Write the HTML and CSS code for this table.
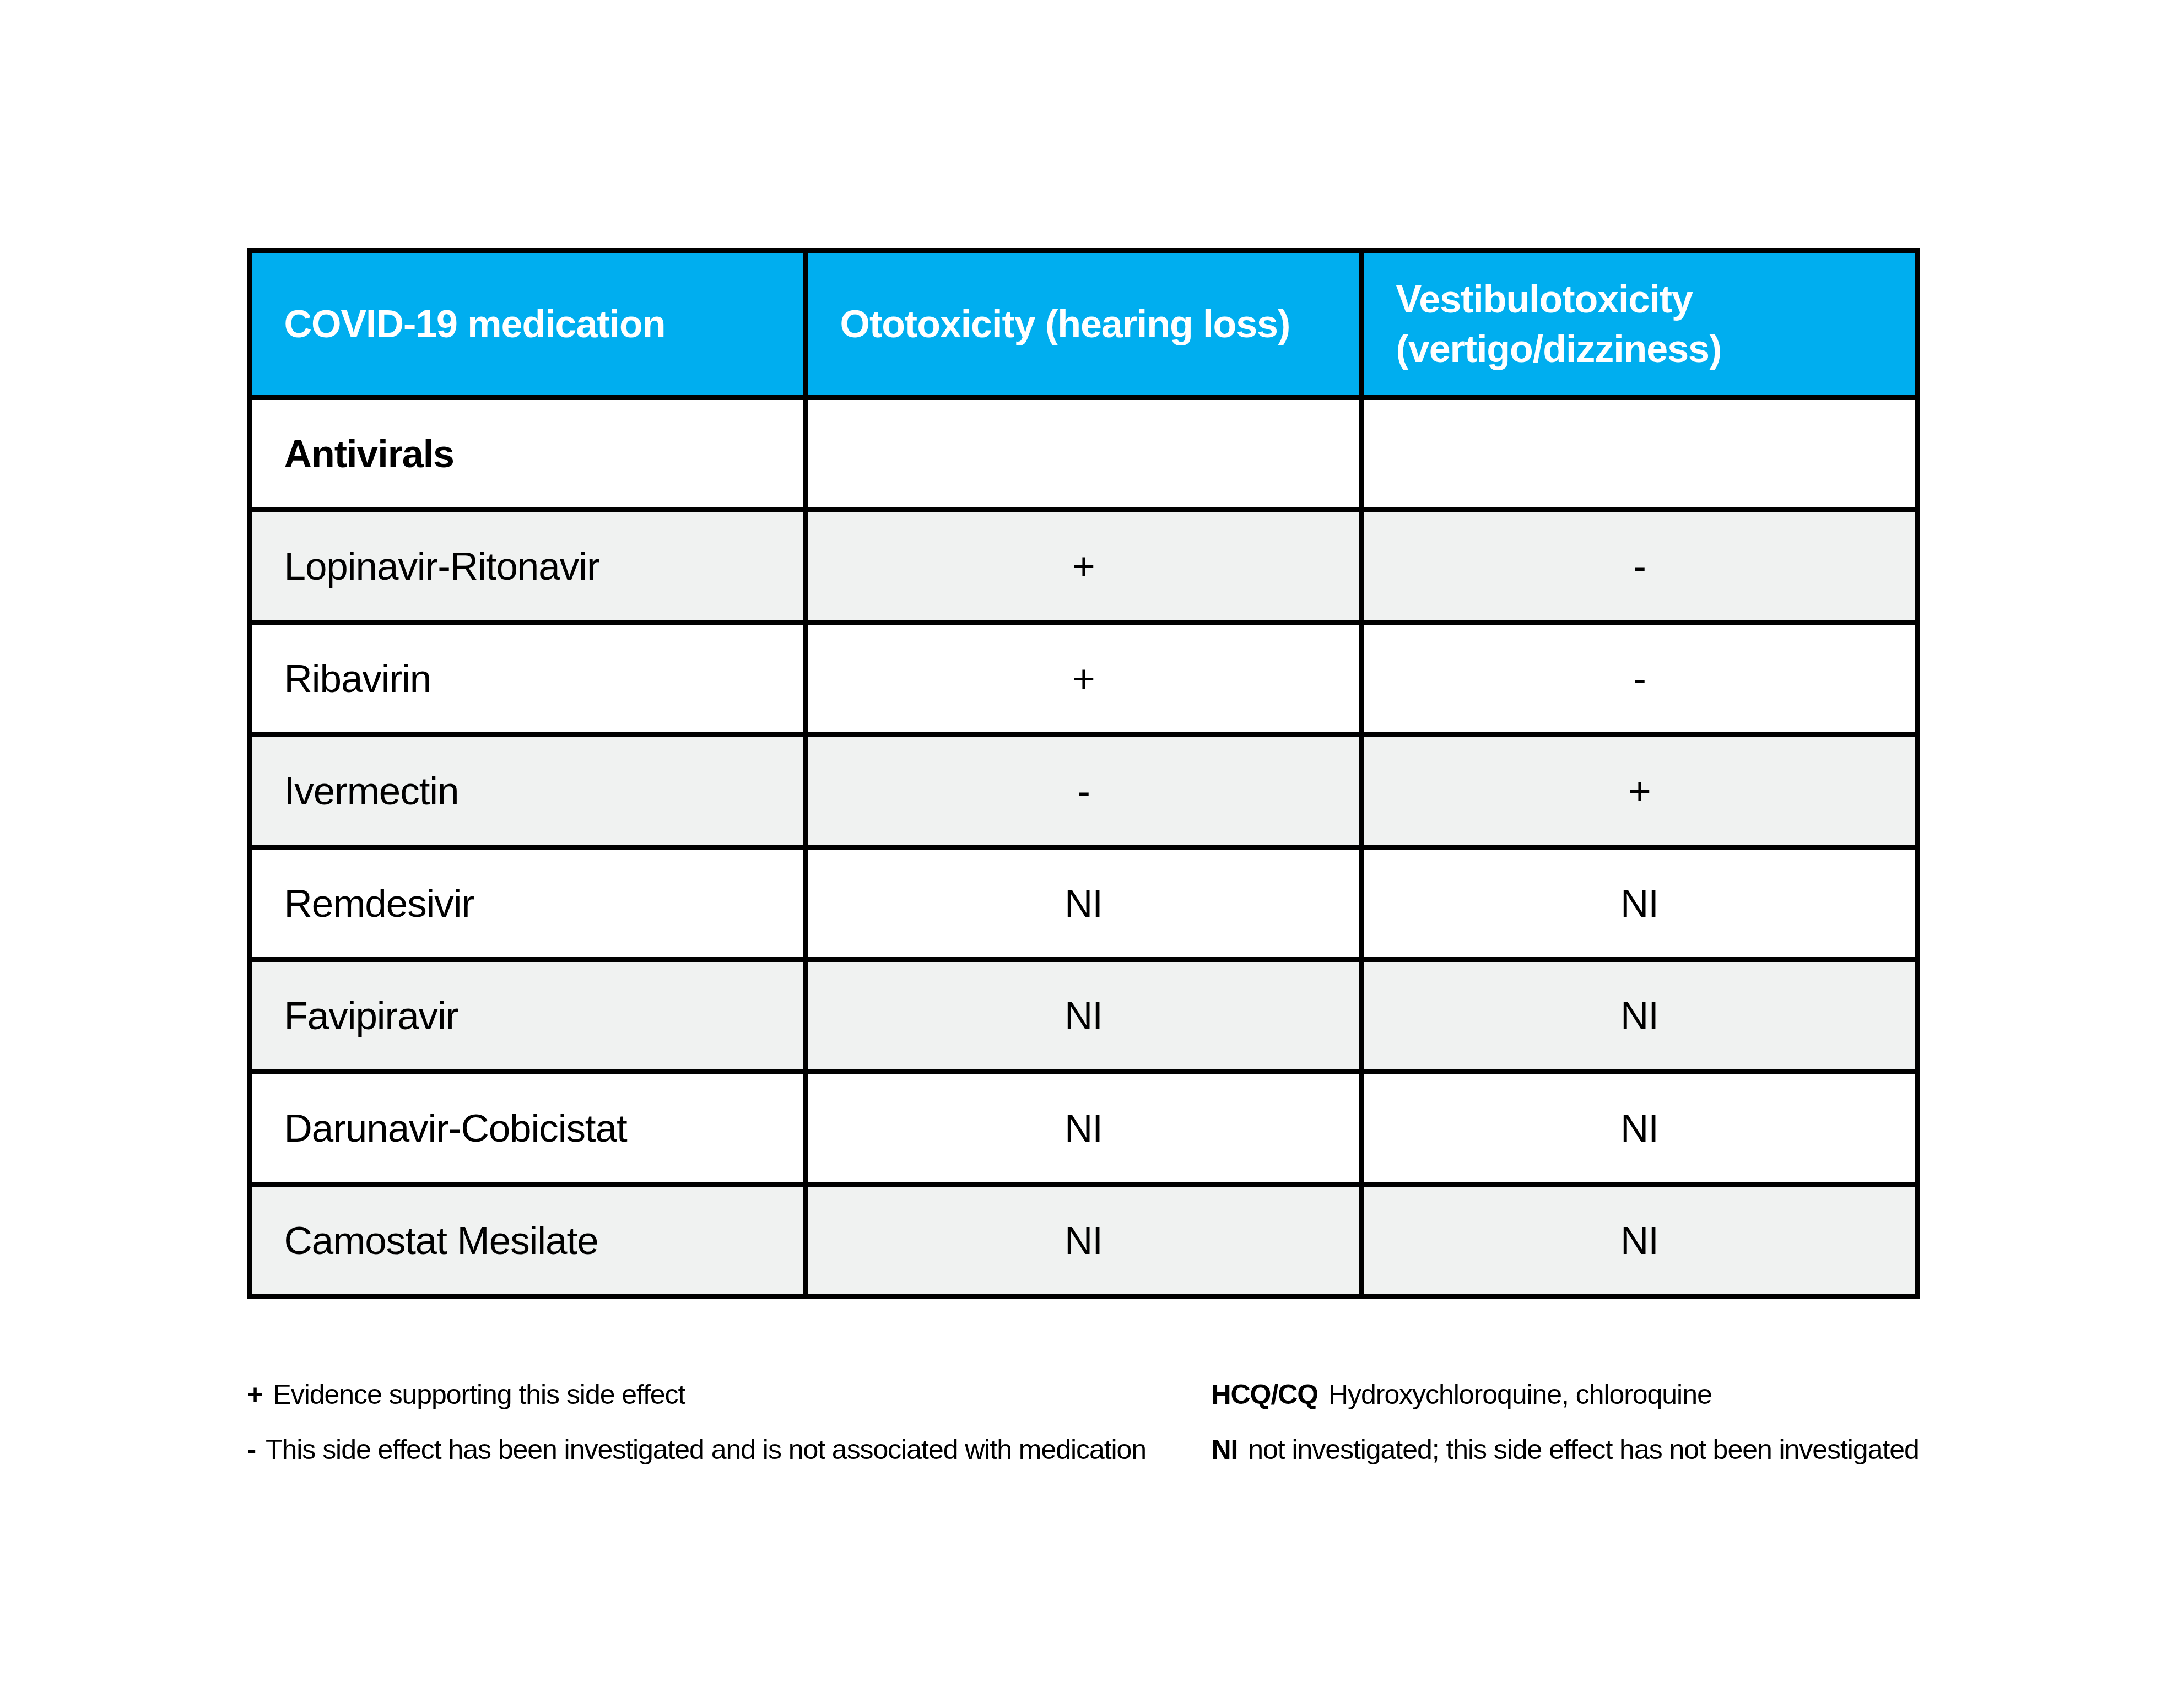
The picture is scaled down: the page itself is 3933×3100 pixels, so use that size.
FILE: index.html
```html
<!DOCTYPE html>
<html lang="en">
<head>
<meta charset="utf-8">
<title>COVID-19 medication ototoxicity</title>
<link rel="stylesheet" href="styles.css">
</head>
<body>
<main class="page">
  <table class="med-table">
    <colgroup>
      <col class="col">
      <col class="col">
      <col class="col">
    </colgroup>
    <thead>
      <tr class="head-row">
        <th>COVID-19 medication</th>
        <th>Ototoxicity (hearing loss)</th>
        <th>Vestibulotoxicity<br>(vertigo/dizziness)</th>
      </tr>
    </thead>
    <tbody>
      <tr class="row">
        <td class="group">Antivirals</td>
        <td class="val"></td>
        <td class="val"></td>
      </tr>
      <tr class="row alt">
        <td>Lopinavir-Ritonavir</td>
        <td class="val">+</td>
        <td class="val">-</td>
      </tr>
      <tr class="row">
        <td>Ribavirin</td>
        <td class="val">+</td>
        <td class="val">-</td>
      </tr>
      <tr class="row alt">
        <td>Ivermectin</td>
        <td class="val">-</td>
        <td class="val">+</td>
      </tr>
      <tr class="row">
        <td>Remdesivir</td>
        <td class="val">NI</td>
        <td class="val">NI</td>
      </tr>
      <tr class="row alt">
        <td>Favipiravir</td>
        <td class="val">NI</td>
        <td class="val">NI</td>
      </tr>
      <tr class="row">
        <td>Darunavir-Cobicistat</td>
        <td class="val">NI</td>
        <td class="val">NI</td>
      </tr>
      <tr class="row alt">
        <td>Camostat Mesilate</td>
        <td class="val">NI</td>
        <td class="val">NI</td>
      </tr>
    </tbody>
  </table>

  <section class="legend">
    <div class="legend-col">
      <p class="legend-item"><b class="key">+</b> Evidence supporting this side effect</p>
      <p class="legend-item"><b class="key">-</b> This side effect has been investigated and is not associated with medication</p>
    </div>
    <div class="legend-col">
      <p class="legend-item"><b class="key">HCQ/CQ</b> Hydroxychloroquine, chloroquine</p>
      <p class="legend-item"><b class="key">NI</b> not investigated; this side effect has not been investigated</p>
    </div>
  </section>
</main>
</body>
</html>
```

FILE: styles.css
```css
html, body {
  margin: 0;
  padding: 0;
  background: #ffffff;
}

body {
  font-family: "Liberation Sans", Arial, Helvetica, sans-serif;
  color: #000000;
  letter-spacing: -1.05px;
}

.page {
  width: 3036px;
  margin: 0 auto;
  padding-top: 450px;
  padding-bottom: 400px;
}

.med-table {
  width: 3036px;
  table-layout: fixed;
  border-collapse: collapse;
  border: 9px solid #000;
}

.col {
  width: 33.333%;
}

.med-table th,
.med-table td {
  border: 9px solid #000;
  padding: 0 40px 0 58px;
  vertical-align: middle;
  text-align: left;
}

.head-row {
  height: 267px;
}

.head-row th {
  background: #00aeef;
  color: #ffffff;
  font-weight: 700;
  font-size: 70px;
  line-height: 90px;
}

.row {
  height: 204px;
}

.row td {
  background: #ffffff;
  font-size: 71px;
  line-height: 90px;
  font-weight: 400;
}

.row.alt td {
  background: #f0f2f1;
}

.row td.group {
  font-weight: 700;
  font-size: 70px;
}

.row td.val {
  text-align: center;
  padding: 0;
}

.legend {
  display: grid;
  grid-template-columns: 1750px 1fr;
  margin-top: 123px;
  font-size: 50px;
  line-height: 100px;
}

.legend-col {
  display: flex;
  flex-direction: column;
}

.legend-item {
  margin: 0;
  white-space: nowrap;
}

.key {
  font-weight: 700;
  margin-right: 6px;
}
```
